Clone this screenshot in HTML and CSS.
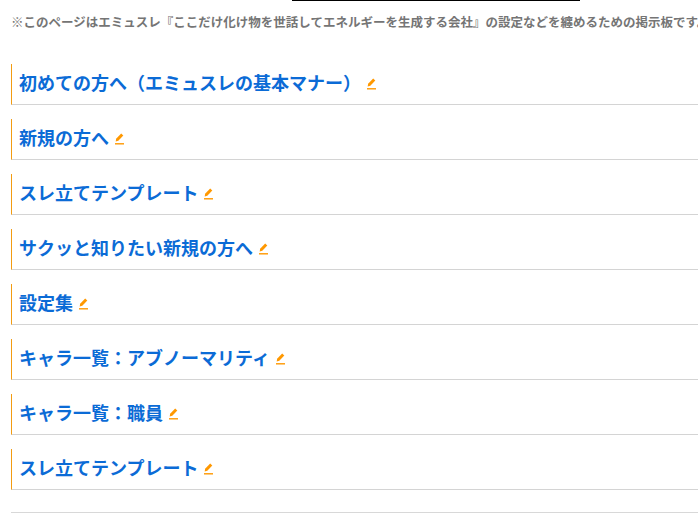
FILE: index.html
```html
<!DOCTYPE html>
<html lang="ja">
<head>
    <meta charset="UTF-8">
    <meta name="viewport" content="width=device-width, initial-scale=1.0">
    <title>エミュスレ</title>
    <link rel="stylesheet" href="styles.css">
</head>
<body>
    <div class="top-bar"></div>
    <p class="note">※このページはエミュスレ『ここだけ化け物を世話してエネルギーを生成する会社』の設定などを纏めるための掲示板です。</p>

    <h2 class="thread"><a href="#">初めての方へ（エミュスレの基本マナー）</a><svg class="edit" viewBox="0 0 9 12"><path d="M0.7 8.5 L1.1 5.7 L6.2 0.5 L8.3 2.4 L3.3 7.8 Z"/><rect x="0" y="10.1" width="9" height="1.4"/></svg></h2>
    <h2 class="thread"><a href="#">新規の方へ</a><svg class="edit" viewBox="0 0 9 12"><path d="M0.7 8.5 L1.1 5.7 L6.2 0.5 L8.3 2.4 L3.3 7.8 Z"/><rect x="0" y="10.1" width="9" height="1.4"/></svg></h2>
    <h2 class="thread"><a href="#">スレ立てテンプレート</a><svg class="edit" viewBox="0 0 9 12"><path d="M0.7 8.5 L1.1 5.7 L6.2 0.5 L8.3 2.4 L3.3 7.8 Z"/><rect x="0" y="10.1" width="9" height="1.4"/></svg></h2>
    <h2 class="thread"><a href="#">サクッと知りたい新規の方へ</a><svg class="edit" viewBox="0 0 9 12"><path d="M0.7 8.5 L1.1 5.7 L6.2 0.5 L8.3 2.4 L3.3 7.8 Z"/><rect x="0" y="10.1" width="9" height="1.4"/></svg></h2>
    <h2 class="thread"><a href="#">設定集</a><svg class="edit" viewBox="0 0 9 12"><path d="M0.7 8.5 L1.1 5.7 L6.2 0.5 L8.3 2.4 L3.3 7.8 Z"/><rect x="0" y="10.1" width="9" height="1.4"/></svg></h2>
    <h2 class="thread"><a href="#">キャラ一覧：アブノーマリティ</a><svg class="edit" viewBox="0 0 9 12"><path d="M0.7 8.5 L1.1 5.7 L6.2 0.5 L8.3 2.4 L3.3 7.8 Z"/><rect x="0" y="10.1" width="9" height="1.4"/></svg></h2>
    <h2 class="thread"><a href="#">キャラ一覧：職員</a><svg class="edit" viewBox="0 0 9 12"><path d="M0.7 8.5 L1.1 5.7 L6.2 0.5 L8.3 2.4 L3.3 7.8 Z"/><rect x="0" y="10.1" width="9" height="1.4"/></svg></h2>
    <h2 class="thread"><a href="#">スレ立てテンプレート</a><svg class="edit" viewBox="0 0 9 12"><path d="M0.7 8.5 L1.1 5.7 L6.2 0.5 L8.3 2.4 L3.3 7.8 Z"/><rect x="0" y="10.1" width="9" height="1.4"/></svg></h2>

    <hr class="bottom-rule">
</body>
</html>
```

FILE: styles.css
```css
body {
    margin: 0;
    overflow: hidden;
    background: #fff;
    font-family: "Liberation Sans", "Noto Sans CJK JP", sans-serif;
}

.top-bar {
    width: 288px;
    height: 1px;
    margin-left: 292px;
    background: #000;
}

.note {
    margin: 15px 0 0 11px;
    font-size: 12.5px;
    line-height: 15px;
    font-weight: bold;
    color: #757575;
    white-space: nowrap;
}

.thread {
    display: flex;
    align-items: center;
    box-sizing: border-box;
    height: 41px;
    margin: 14px 0 0 11px;
    padding: 0 0 5px 7px;
    border-left: 1px solid #f39c12;
    border-bottom: 1px solid #d4d4d4;
    font-size: 18px;
    font-weight: bold;
    white-space: nowrap;
}

.thread:first-of-type {
    margin-top: 33px;
}

.thread a {
    color: #0b6bd6;
    text-decoration: none;
}

.edit {
    width: 9px;
    height: 12px;
    margin: 5px 0 0 6px;
    fill: #ff9800;
}

.bottom-rule {
    height: 1px;
    margin: 22px 0 0 11px;
    border: 0;
    background: #d8d8d8;
}
```
